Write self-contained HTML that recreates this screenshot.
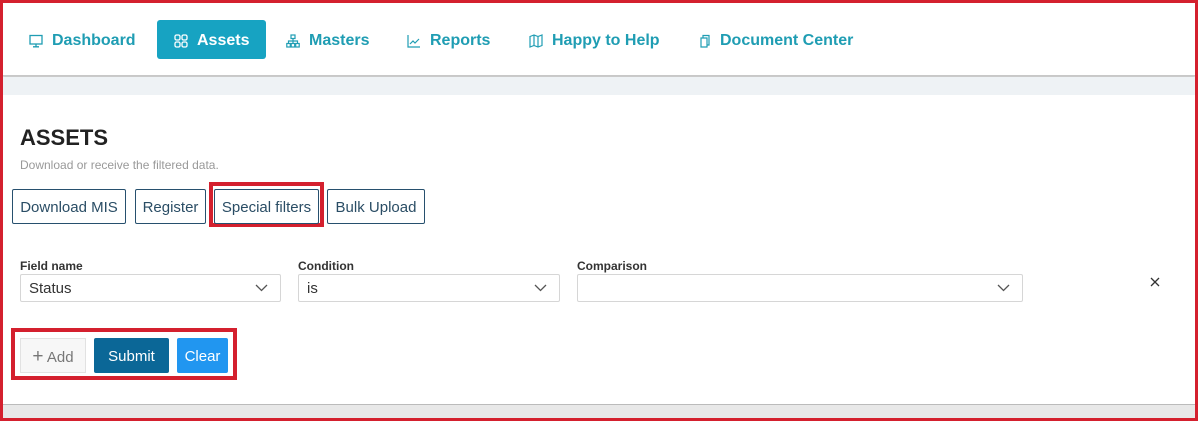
<!DOCTYPE html><html><head><style>
*{box-sizing:border-box;margin:0;padding:0}
body{width:1198px;height:421px;overflow:hidden;font-family:"Liberation Sans",sans-serif;background:#e8e8e8;position:relative}
.frame{position:absolute;inset:0;border:3px solid #d4202e;border-bottom-width:3px}
.nav{position:absolute;left:3px;top:3px;width:1192px;height:73px;background:#fff;border-bottom:1px solid #c8c8c8;box-shadow:0 1px 2px #bbb}
.band{position:absolute;left:3px;top:77px;width:1192px;height:18px;background:#eef2f5}
.content{position:absolute;left:3px;top:95px;width:1192px;height:310px;background:#fff;border-bottom:1px solid #bbb}
.ni{position:absolute;top:20px;height:39px;line-height:39px;color:#1f9db3;font-weight:bold;font-size:16px;display:flex;align-items:center;gap:9px;padding-top:2px}
.ni svg{width:14px;height:14px}
.act{background:#17a3c2;color:#fff;border-radius:3px;padding:2px 16px 0 17px}
.abs{position:absolute}
.ob{position:absolute;top:189px;height:35px;border:1px solid #27506e;border-radius:2px;color:#2a4d65;font-size:15px;line-height:35px;text-align:center}
.lbl{position:absolute;top:259px;font-size:12px;font-weight:bold;color:#333}
.sel{position:absolute;top:274px;height:28px;border:1px solid #d6d6d6;border-radius:2px;font-size:15px;color:#333;line-height:28px;padding-left:8px}
.sel svg{position:absolute;right:12px;top:9px}
.rb{position:absolute;border:4px solid #d4202e}
</style></head><body>
<div class="nav"></div><div class="band"></div><div class="content"></div>
<div class="ni" style="left:29px"><svg viewBox="0 0 14 14" fill="none" stroke="#1f9db3" stroke-width="1.3"><rect x="1" y="1.5" width="12" height="8.5"/><path d="M7 10v2.5M4 12.8h6"/></svg>Dashboard</div>
<div class="ni act" style="left:157px;width:109px"><svg viewBox="0 0 14 14" fill="none" stroke="#fff" stroke-width="1.3"><rect x="1" y="1" width="5" height="5" rx="1.5"/><rect x="8" y="1" width="5" height="5" rx="1.5"/><rect x="1" y="8" width="5" height="5" rx="1.5"/><rect x="8" y="8" width="5" height="5" rx="1.5"/></svg>Assets</div>
<div class="ni" style="left:286px"><svg viewBox="0 0 14 14" fill="none" stroke="#1f9db3" stroke-width="1.2"><rect x="5" y="1" width="4" height="3.5"/><rect x="0.8" y="9.5" width="3.5" height="3.5"/><rect x="5.2" y="9.5" width="3.5" height="3.5"/><rect x="9.7" y="9.5" width="3.5" height="3.5"/><path d="M7 4.5v5M2.5 9.5V7h9v2.5"/></svg>Masters</div>
<div class="ni" style="left:407px"><svg viewBox="0 0 14 14" fill="none" stroke="#1f9db3" stroke-width="1.2"><path d="M1 1v12h12M3 10l3-3 2 2 4-4"/></svg>Reports</div>
<div class="ni" style="left:529px"><svg viewBox="0 0 14 14" fill="none" stroke="#1f9db3" stroke-width="1.2"><path d="M1 2.5l4-1.5 4 1.5 4-1.5v10.5l-4 1.5-4-1.5-4 1.5zM5 1v10.5M9 2.5V13"/></svg>Happy to Help</div>
<div class="ni" style="left:697px"><svg viewBox="0 0 14 14" fill="none" stroke="#1f9db3" stroke-width="1.2"><path d="M4 4h6v9H4z M6 4V1.5h6V11h-2"/></svg>Document Center</div>
<div class="abs" style="left:20px;top:125px;font-size:22px;font-weight:bold;color:#222">ASSETS</div>
<div class="abs" style="left:20px;top:158px;font-size:12px;color:#999">Download or receive the filtered data.</div>
<div class="rb" style="left:209px;top:182px;width:115px;height:45px"></div>
<div class="ob" style="left:12px;width:114px">Download MIS</div>
<div class="ob" style="left:135px;width:71px">Register</div>
<div class="ob" style="left:214px;width:105px">Special filters</div>
<div class="ob" style="left:327px;width:98px">Bulk Upload</div>
<div class="lbl" style="left:20px">Field name</div>
<div class="lbl" style="left:298px">Condition</div>
<div class="lbl" style="left:577px">Comparison</div>
<div class="sel" style="left:20px;width:261px">Status<svg width="13" height="8" viewBox="0 0 13 8" fill="none" stroke="#555" stroke-width="1.3"><path d="M1 1l5.5 5.5L12 1"/></svg></div>
<div class="sel" style="left:298px;width:262px">is<svg width="13" height="8" viewBox="0 0 13 8" fill="none" stroke="#555" stroke-width="1.3"><path d="M1 1l5.5 5.5L12 1"/></svg></div>
<div class="sel" style="left:577px;width:446px"><svg width="13" height="8" viewBox="0 0 13 8" fill="none" stroke="#555" stroke-width="1.3"><path d="M1 1l5.5 5.5L12 1"/></svg></div>
<svg class="abs" style="left:1150px;top:277px" width="10" height="10" viewBox="0 0 10 10" stroke="#333" stroke-width="1.3"><path d="M1 1l8 8M9 1l-8 8"/></svg>
<div class="rb" style="left:11px;top:328px;width:226px;height:52px"></div>
<div class="abs" style="left:20px;top:338px;width:66px;height:35px;border:1px solid #e2e2e2;background:#f7f7f7;color:#777;font-size:15px;line-height:35px;text-align:center"><span style="font-size:19px;font-weight:300">+</span> Add</div>
<div class="abs" style="left:94px;top:338px;width:75px;height:35px;background:#0b6797;color:#fff;font-size:15px;line-height:37px;text-align:center;border-radius:2px">Submit</div>
<div class="abs" style="left:177px;top:338px;width:51px;height:35px;background:#2196f0;color:#fff;font-size:15px;line-height:37px;text-align:center;border-radius:2px">Clear</div>
<div class="frame"></div>
</body></html>
